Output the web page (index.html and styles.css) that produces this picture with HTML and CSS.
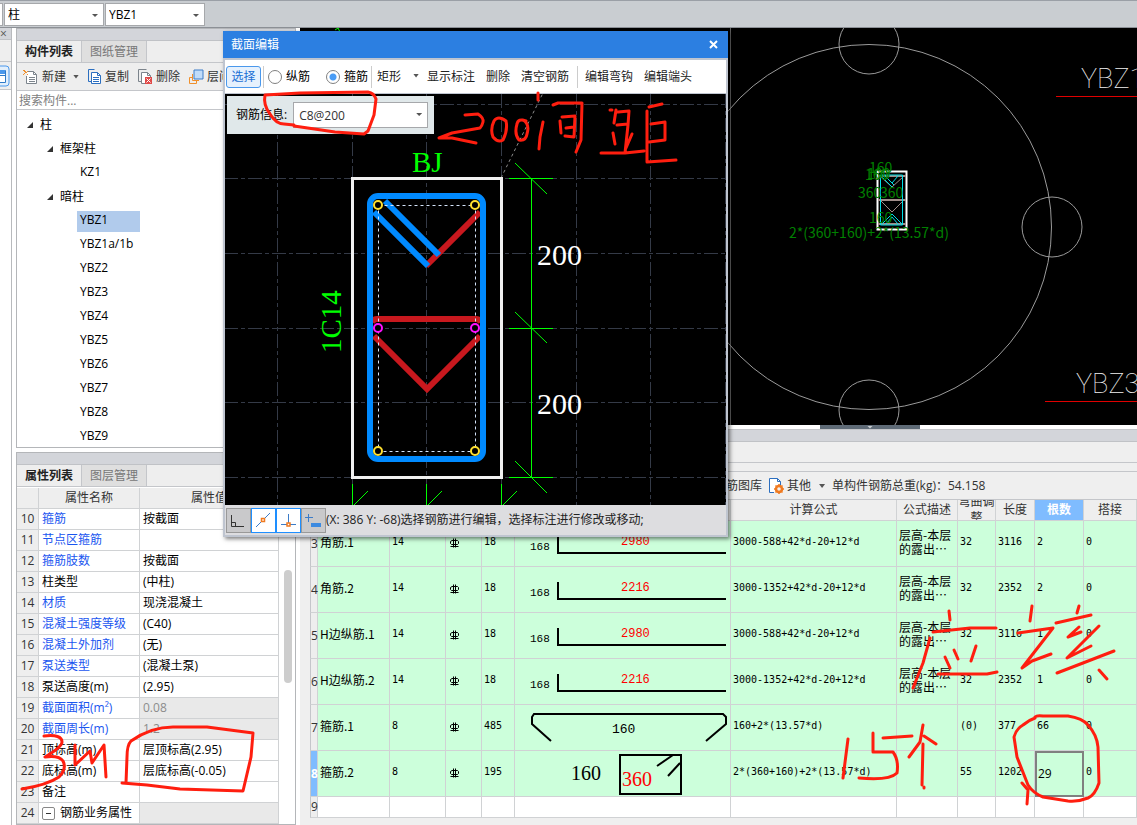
FILE: index.html
```html
<!DOCTYPE html>
<html lang="zh-CN">
<head>
    <title>截面编辑</title>
    <meta charset="utf-8">
    <link rel="stylesheet" href="styles.css">
</head>
<body>
    <svg class="defs" aria-hidden="true">
        <symbol id="rebar" viewBox="0 0 11 11">
            <path d="M4.500 0.500v9M6.500 0.500v9M1.500 8.500h8M3 2.500h5.500l1 1v2l-1 1h-6l-1-1v-2z" fill="none" stroke="#000"/>
        </symbol>
        <symbol id="bar" viewBox="0 0 215 45">
            <path d="M43 15v17h168" fill="none" stroke="#000" stroke-width="2"/>
        </symbol>
    </svg>

    <header class="topbar">
        <span class="combo combo-edge"></span>
        <span class="combo"><select aria-label="构件类型"><option>柱</option></select></span>
        <span class="combo"><select aria-label="构件名称"><option>YBZ1</option></select></span>
    </header>

    <div class="workspace">
        <aside class="rail">
            <div class="strip"><button class="rail-close" aria-label="关闭">×</button></div>
            <div class="rail-gap"></div>
            <div class="rail-tool">
                <svg width="10" height="23" viewBox="0 0 10 23"><path d="M0 1h6q3 0 3 3v14q0 3-3 3H0" fill="#e2effc" stroke="#4a98ec"/><path d="M0 5.500h5.500v12H0M0 10.500h5" fill="#fff" stroke="#2e7ac8"/><path d="M0 5h5v4H0z" fill="#4a98ec"/></svg>
            </div>
        </aside>

        <div class="side">
            <section class="panel">
                <div class="strip"></div>
                <nav class="tabs">
                    <button class="tab active">构件列表</button>
                    <button class="tab">图纸管理</button>
                </nav>
                <div class="toolbar">
                    <button class="tool">
                        <svg width="16" height="16" viewBox="0 0 16 16"><path d="M4.500 2.500h6l3 3v9h-10V7" fill="#fff" stroke="#7c848c"/><path d="M10.500 2.500v3h3M6 8.500h6M6 10.500h6M6 12.500h6" fill="none" stroke="#7c848c"/><path d="M0 1h2v1h1v1h1V2h1v1H4v1H3v1h2v1H4V5H3V4H2v1H1v1H0V5h1V4h1V3H1V2H0z" fill="#f0902c"/></svg>
                        新建<i class="caret"></i>
                    </button>
                    <button class="tool">
                        <svg width="14" height="16" viewBox="0 0 14 16"><path d="M3 12.500H.5V.5h6" fill="none" stroke="#2c6fc0"/><path d="M3.500 3.500h6l3 3v8h-9z" fill="#fff" stroke="#2c6fc0"/><path d="M9.500 3.500v3h3M5 8.500h6M5 10.500h6M5 12.500h6" fill="none" stroke="#2c6fc0"/></svg>
                        复制
                    </button>
                    <button class="tool">
                        <svg width="15" height="16" viewBox="0 0 15 16"><path d="M3 12.500H.5V.5h8" fill="none" stroke="#7c848c"/><path d="M7 14.500H3.500v-11h6l3 3V8" fill="#fff" stroke="#7c848c"/><path d="M9.500 3.500v3h3" fill="none" stroke="#7c848c"/><path d="M7 8h7v7H7z" fill="#e04a48"/><path d="M8.500 9.500l4 4m0-4l-4 4" stroke="#fff"/></svg>
                        删除
                    </button>
                    <button class="tool">
                        <svg width="15" height="16" viewBox="0 0 15 16"><path d="M3 8.500H.5v6h7v-3" fill="none" stroke="#f0902c"/><path d="M3.500 5v6.500H10" fill="none" stroke="#f0902c"/><path d="M5 1h9v9H5z" fill="#c0dcfa" stroke="#3c7cc8"/></svg>
                        层间复制
                    </button>
                </div>
                <input class="search" type="text" placeholder="搜索构件..." aria-label="搜索构件">
                <ul class="tree">
                    <li class="node lv1"><i class="fold"></i>柱</li>
                    <li class="node lv2"><i class="fold"></i>框架柱</li>
                    <li class="node lv3"><span>KZ1</span></li>
                    <li class="node lv2"><i class="fold"></i>暗柱</li>
                    <li class="node lv3 selected"><span>YBZ1</span></li>
                    <li class="node lv3"><span>YBZ1a/1b</span></li>
                    <li class="node lv3"><span>YBZ2</span></li>
                    <li class="node lv3"><span>YBZ3</span></li>
                    <li class="node lv3"><span>YBZ4</span></li>
                    <li class="node lv3"><span>YBZ5</span></li>
                    <li class="node lv3"><span>YBZ6</span></li>
                    <li class="node lv3"><span>YBZ7</span></li>
                    <li class="node lv3"><span>YBZ8</span></li>
                    <li class="node lv3"><span>YBZ9</span></li>
                </ul>
            </section>

            <section class="panel">
                <div class="strip"></div>
                <nav class="tabs">
                    <button class="tab active">属性列表</button>
                    <button class="tab">图层管理</button>
                </nav>
                <div class="props-wrap">
                    <table class="props">
                        <colgroup><col class="p-no"><col class="p-name"><col></colgroup>
                        <thead><tr><th></th><th>属性名称</th><th>属性值</th></tr></thead>
                        <tbody>
                            <tr><th>10</th><td class="link">箍筋</td><td>按截面</td></tr>
                            <tr><th>11</th><td class="link">节点区箍筋</td><td></td></tr>
                            <tr><th>12</th><td class="link">箍筋肢数</td><td>按截面</td></tr>
                            <tr><th>13</th><td>柱类型</td><td>(中柱)</td></tr>
                            <tr><th>14</th><td class="link">材质</td><td>现浇混凝土</td></tr>
                            <tr><th>15</th><td class="link">混凝土强度等级</td><td>(C40)</td></tr>
                            <tr><th>16</th><td class="link">混凝土外加剂</td><td>(无)</td></tr>
                            <tr><th>17</th><td class="link">泵送类型</td><td>(混凝土泵)</td></tr>
                            <tr><th>18</th><td>泵送高度(m)</td><td>(2.95)</td></tr>
                            <tr><th>19</th><td class="link">截面面积(m²)</td><td class="locked">0.08</td></tr>
                            <tr><th>20</th><td class="link">截面周长(m)</td><td class="locked">1.2</td></tr>
                            <tr><th>21</th><td>顶标高(m)</td><td>层顶标高(2.95)</td></tr>
                            <tr><th>22</th><td>底标高(m)</td><td>层底标高(-0.05)</td></tr>
                            <tr><th>23</th><td>备注</td><td></td></tr>
                            <tr><th>24</th><td class="group"><button class="minus" aria-label="折叠"></button>钢筋业务属性</td><td class="locked"></td></tr>
                            <tr><th></th><td></td><td></td></tr>
                        </tbody>
                    </table>
                    <div class="scroll"><div class="thumb"></div></div>
                </div>
            </section>
        </div>

        <main class="main">
            <div class="viewport">
                <svg class="plan" width="837" height="397" viewBox="300 28 837 397">
                    <path d="M335 30l3-2 2 4" stroke="#00ff00" fill="none"/>
                    <path d="M730.500 28v397" stroke="#5c5c5c"/>
                    <g fill="none" stroke="#9a9a9a">
                        <circle cx="869" cy="227" r="182.500"/>
                        <circle cx="869" cy="44" r="30"/>
                        <circle cx="1052" cy="227" r="30"/>
                        <circle cx="869" cy="410" r="30"/>
                    </g>
                    <path d="M1056 96.500h81" stroke="#e00000"/>
                    <path d="M1045 401.500h92" stroke="#e00000"/>
                    <text class="axis" x="1081" y="88">YBZ1</text>
                    <text class="axis" x="1076" y="393">YBZ3</text>
                    <g fill="none">
                        <path d="M877.500 171.500h29v58h-29z" stroke="#fff" stroke-width="2"/>
                        <path d="M878 176h28M878 200h28M878 224h28" stroke="#a08c88" stroke-width="2"/>
                        <path d="M881 177l11 10 11-10M881 201l11 11 11-11M892 214l-10 10M892 214l10 10" stroke="#a08c88"/>
                        <path d="M880.500 175h22v50h-22zM882 177l10 10M885 176l9 9M892 183l6-7M882 224l10-10 10 10M886 224l6-7 6 7" stroke="#00e0e8"/>
                    </g>
                    <g class="cad">
                        <text x="869" y="173">160</text>
                        <text x="865" y="180">160</text>
                        <text x="867" y="179">100</text>
                        <text x="858" y="198">360</text>
                        <text x="880" y="198">360</text>
                        <text x="869" y="223">160</text>
                        <text x="789" y="238">2*(360+160)+2*(13.57*d)</text>
                    </g>
                </svg>
            </div>
            <div class="splitter"><button class="grip" aria-label="收起"></button></div>
            <section class="detail">
                <div class="strip"></div>
                <div class="detail-tabs"></div>
                <div class="detail-gap"></div>
                <div class="detail-tools">
                    <button class="tool">钢筋图库</button>
                    <button class="tool">
                        <svg width="15" height="16" viewBox="0 0 15 16"><path d="M5 14.500H.5V.5h8l3 3V8" fill="#fff" stroke="#2c6fc0"/><path d="M8.500.5v3h3" fill="none" stroke="#2c6fc0"/><circle cx="10" cy="11" r="3" fill="none" stroke="#f07a20" stroke-width="2.500"/><path d="M10 6v2m0 6v2m-5-5h2m6 0h2m-8.500-3.500l1.500 1.500m4 4l1.500 1.500m0-7l-1.500 1.500m-4 4l-1.500 1.500" stroke="#f07a20" stroke-width="1.500"/></svg>
                        其他<i class="caret"></i>
                    </button>
                    <span class="total">单构件钢筋总重(kg)：54.158</span>
                </div>
                <table class="bars">
                    <colgroup>
                        <col class="b-no"><col class="b-name"><col class="b-dia"><col class="b-lv"><col class="b-code"><col class="b-shape">
                        <col class="b-calc"><col class="b-desc"><col class="b-adj"><col class="b-len"><col class="b-cnt"><col>
                    </colgroup>
                    <thead>
                        <tr>
                            <th></th><th>筋号</th><th>直径</th><th>级别</th><th>图号</th><th>图形</th>
                            <th>计算公式</th><th>公式描述</th><th><div class="clip">弯曲调整</div></th><th>长度</th><th class="picked">根数</th><th>搭接</th>
                        </tr>
                    </thead>
                    <tbody>
                        <tr>
                            <th>3</th><td class="zh">角筋.1</td><td>14</td><td><svg class="lv"><use href="#rebar"/></svg></td><td>18</td>
                            <td class="shape"><svg width="215" height="45"><use href="#bar"/><text class="t11" x="15" y="29">168</text><text class="t12 red" x="106" y="24">2980</text></svg></td>
                            <td>3000-588+42*d-20+12*d</td><td class="zh">层高-本层<br>的露出…</td><td>32</td><td>3116</td><td>2</td><td>0</td>
                        </tr>
                        <tr>
                            <th>4</th><td class="zh">角筋.2</td><td>14</td><td><svg class="lv"><use href="#rebar"/></svg></td><td>18</td>
                            <td class="shape"><svg width="215" height="45"><use href="#bar"/><text class="t11" x="15" y="29">168</text><text class="t12 red" x="106" y="24">2216</text></svg></td>
                            <td>3000-1352+42*d-20+12*d</td><td class="zh">层高-本层<br>的露出…</td><td>32</td><td>2352</td><td>2</td><td>0</td>
                        </tr>
                        <tr>
                            <th>5</th><td class="zh">H边纵筋.1</td><td>14</td><td><svg class="lv"><use href="#rebar"/></svg></td><td>18</td>
                            <td class="shape"><svg width="215" height="45"><use href="#bar"/><text class="t11" x="15" y="29">168</text><text class="t12 red" x="106" y="24">2980</text></svg></td>
                            <td>3000-588+42*d-20+12*d</td><td class="zh">层高-本层<br>的露出…</td><td>32</td><td>3116</td><td>1</td><td>0</td>
                        </tr>
                        <tr>
                            <th>6</th><td class="zh">H边纵筋.2</td><td>14</td><td><svg class="lv"><use href="#rebar"/></svg></td><td>18</td>
                            <td class="shape"><svg width="215" height="45"><use href="#bar"/><text class="t11" x="15" y="29">168</text><text class="t12 red" x="106" y="24">2216</text></svg></td>
                            <td>3000-1352+42*d-20+12*d</td><td class="zh">层高-本层<br>的露出…</td><td>32</td><td>2352</td><td>1</td><td>0</td>
                        </tr>
                        <tr>
                            <th>7</th><td class="zh">箍筋.1</td><td>8</td><td><svg class="lv"><use href="#rebar"/></svg></td><td>485</td>
                            <td class="shape"><svg width="215" height="45"><path d="M36 36L17 19v-7l2-3h189l3 3v7L191 36" fill="none" stroke="#000" stroke-width="2"/><text class="t13" x="97" y="28">160</text></svg></td>
                            <td>160+2*(13.57*d)</td><td></td><td>(0)</td><td>377</td><td>66</td><td>0</td>
                        </tr>
                        <tr>
                            <th class="picked">8</th><td class="zh">箍筋.2</td><td>8</td><td><svg class="lv"><use href="#rebar"/></svg></td><td>195</td>
                            <td class="shape"><svg width="215" height="45"><path d="M105 4h61v39h-61zM142 15l16-11M153 25l12-13" fill="none" stroke="#000" stroke-width="2"/><text class="t20" x="56" y="29">160</text><text class="t20 red" x="107" y="35">360</text></svg></td>
                            <td>2*(360+160)+2*(13.57*d)</td><td></td><td>55</td><td>1202</td><td class="current">29</td><td>0</td>
                        </tr>
                        <tr class="blank">
                            <th>9</th><td></td><td></td><td></td><td></td><td></td><td></td><td></td><td></td><td></td><td></td><td></td>
                        </tr>
                    </tbody>
                </table>
            </section>
        </main>
    </div>

    <section class="dialog" role="dialog" aria-label="截面编辑">
        <div class="dialog-title">截面编辑<button class="dialog-close" aria-label="关闭"><svg width="9" height="9" viewBox="0 0 9 9"><path d="M1 1l7 7m0-7l-7 7" stroke="#fff" stroke-width="2"/></svg></button></div>
        <div class="dialog-tools">
            <button class="pick">选择</button>
            <i class="sep"></i>
            <label class="radio"><input type="radio" name="kind">纵筋</label>
            <label class="radio"><input type="radio" name="kind" checked>箍筋</label>
            <i class="sep"></i>
            <button class="cmd drop">矩形<i class="caret"></i></button>
            <button class="cmd">显示标注</button>
            <button class="cmd">删除</button>
            <button class="cmd">清空钢筋</button>
            <i class="sep wide"></i>
            <button class="cmd">编辑弯钩</button>
            <button class="cmd">编辑端头</button>
        </div>
        <div class="dialog-canvas">
            <svg class="section" width="501" height="411" viewBox="225 94 501 411">
                <path d="M224 104.500h502M224 178.500h502M224 253.500h502M224 328.500h502M224 402.500h502M224 477.500h502M277.500 94v411M352.500 94v411M426.500 94v411M501.500 94v411M576.500 94v411M650.500 94v411M725.500 94v411" stroke="#343a47" stroke-dasharray="14 3 4 3" fill="none"/>
                <path d="M501 178l42-85" stroke="#8c8c8c" stroke-dasharray="3 3"/>
                <path d="M352.500 178.500h149v299h-149z" fill="none" stroke="#f0f0f0" stroke-width="3"/>
                <g fill="none" stroke="#c8181e" stroke-width="6">
                    <path d="M480 212l-54 54"/>
                    <path d="M372 322q2-3 5-3h99q3 0 5 3M374 336l53 53 53-53"/>
                </g>
                <path d="M374 212l54 54M385 201l54 54" stroke="#008aff" stroke-width="6"/>
                <rect x="370" y="196" width="113" height="263" rx="8" fill="none" stroke="#008aff" stroke-width="6"/>
                <path d="M378.500 205.500h97v246h-97z" fill="none" stroke="#d4e4fa" stroke-dasharray="3 3"/>
                <g fill="#000" stroke="#ffe030" stroke-width="2">
                    <circle cx="378" cy="205" r="4"/><circle cx="475" cy="205" r="4"/>
                    <circle cx="378" cy="451" r="4"/><circle cx="475" cy="451" r="4"/>
                </g>
                <g fill="#000" stroke="#ff10ff" stroke-width="2">
                    <circle cx="378" cy="328" r="4"/><circle cx="475" cy="328" r="4"/>
                </g>
                <path d="M531.500 178v300M509 178.500h44M509 328.500h44M509 477.500h44M515 163l32 31M515 312l32 31M515 461l32 32M352.500 484v21M354 505l14-14M426.500 484v21M428 505l14-14M501.500 484v21M503 505l14-14" stroke="#00ff00" fill="none"/>
                <text class="dim green" x="412" y="172">BJ</text>
                <text class="dim green" transform="translate(341 353) rotate(-90)">1C14</text>
                <text class="dim" x="537" y="265">200</text>
                <text class="dim" x="537" y="414">200</text>
            </svg>
            <div class="info">
                <label for="rebarInfo">钢筋信息:</label>
                <span class="combo"><select id="rebarInfo"><option>C8@200</option></select></span>
            </div>
        </div>
        <div class="dialog-status">
            <button class="snap" aria-label="正交"><svg width="23" height="23" viewBox="0 0 23 23"><path d="M4.500 6v11.500H17M4.500 13.500h4v4" fill="none" stroke="#333"/></svg></button>
            <button class="snap on" aria-label="中点"><svg width="23" height="23" viewBox="0 0 23 23"><path d="M4 18L18 4" stroke="#3c7cc8"/><path d="M9.500 9.500h3v3h-3z" fill="#fff" stroke="#f07a20" stroke-width="1.500"/></svg></button>
            <button class="snap on" aria-label="垂点"><svg width="23" height="23" viewBox="0 0 23 23"><path d="M11.500 5v10M4 15.500h15" stroke="#3c7cc8"/><path d="M10 14h3v3h-3z" fill="#fff" stroke="#f07a20" stroke-width="1.500"/></svg></button>
            <button class="snap" aria-label="动态输入"><svg width="23" height="23" viewBox="0 0 23 23"><path d="M6.500 5v8M3 8.500h8" stroke="#3c7cc8"/><path d="M9 14h10v4H9z" fill="#3c8ae0"/></svg></button>
            <span>(X: 386 Y: -68)选择钢筋进行编辑，选择标注进行修改或移动;</span>
        </div>
    </section>

    <!-- 手写批注 -->
    <svg class="ink" width="1137" height="825" viewBox="0 0 1137 825" aria-hidden="true">
        <path d="M294 126l41 6 29 2 4-3 6-16 2-16q-2-6-8-7l-68 1-35 2q-2 10 5 19 6 10 14 10l10 1"/>
        <path d="M465 115l13-1q6 4 5 8t-3 6l-28 5-13 5 13 0 24 5"/>
        <path d="M506 121q-8-6-12 0-4 8-1 16 5 6 10 3 5-10 3-19M526 121q-8-3-9 3-3 10 2 16 7 1 8-6 3-10-4-14M543 122l-3 15-1 12M538 93v7"/>
        <path d="M553 105l5-2h24l-1 37-5 12M560 121l1 12M562 117l13-1-1 21-9-1M566 128l8-1"/>
        <path d="M610 110h2M616 110l-2 13M618 112l11-1-1 14-3 28M617 125l11-1M613 133l2 11M632 134l-6 14M601 153h24l19-2M647 111v51l29-2M649 107l13-3M651 124l14-2v18l-16 2"/>
        <path d="M44 736q18-2 18 6 0 5-17 15 14-2 18 4 4 8-4 16-12 8-37 12M75 745v20l15-14 2 12 12-18 2 32"/>
        <path d="M126 783l1-26q0-12 4-16 20-14 42-14h34l46 6-2 24-8 34-63-2-33-4-25-2"/>
        <path d="M949 611l1 9M933 632l37-4h26M930 638l-7 25-10 25M945 657l5 11M954 650l4 9M976 646l-5 15M938 674h49l10-2"/>
        <path d="M1032 606l-2 15M1018 633l35-5-31 40 10-7 19-7M1079 606l-2 7M1056 623l35-8M1079 627l-11 10 13-5M1099 626l-32 32 24-12M1057 673l26-10 31-12M1099 670l8 9"/>
        <path d="M848 739l-5 39M873 733v19h20q6 8 4 21-8 8-38 5M883 738l29-2M923 725l-3 17-11 15M924 736l12 8M923 744l-1 41M924 787v1"/>
        <path d="M1035 717q2-2 8-1h25q14 2 20 9 9 10 10 22l1 36q-4 12-11 15-10 4-20 3l-25-4q-10-4-15-12l-11-28-3-20q2-8 9-12 6-5 12-7M1022 783l6 7-1 14"/>
    </svg>
</body>
</html>
```
FILE: styles.css
```css
* {
    box-sizing: border-box;
}
body {
    margin: 0;
    height: 100vh;
    display: flex;
    flex-direction: column;
    overflow: hidden;
    position: relative;
    background: #fff;
    color: #000;
    font-family: "Open Sans", "Noto Sans CJK SC", sans-serif;
    font-size: 12px;
    line-height: 16px;
}
button, input, select {
    font: inherit;
    color: inherit;
    margin: 0;
    padding: 0;
    border: none;
    background: none;
}
svg {
    flex: none;
}
.defs {
    position: absolute;
    width: 0;
    height: 0;
}
.caret {
    display: inline-block;
    width: 6px;
    height: 4px;
    margin-left: 4px;
    background: #555;
    clip-path: polygon(0 0, 100% 0, 50% 100%);
}

/* 顶部工具条 */
.topbar {
    flex: none;
    display: flex;
    gap: 1px;
    height: 28px;
    padding-top: 2px;
    border-top: 1px solid #9a9fa6;
    border-bottom: 1px solid #8c9096;
    background: #c9cdd1;
}
.combo {
    position: relative;
    width: 100px;
    height: 23px;
    border: 1px solid #a6a8ab;
    background: #fff;
}
.combo-edge {
    width: 3px;
    border-left: none;
}
.combo select {
    appearance: none;
    width: 100%;
    height: 100%;
    padding-left: 3px;
}
.combo:not(.combo-edge)::after {
    content: "";
    position: absolute;
    top: 10px;
    right: 5px;
    width: 6px;
    height: 3px;
    background: #555;
    clip-path: polygon(0 0, 100% 0, 50% 100%);
    pointer-events: none;
}

.workspace {
    flex: 1;
    min-height: 0;
    display: flex;
    gap: 4px;
}
.strip {
    flex: none;
    height: 12px;
    background: #d3d5da;
    border-bottom: 1px solid #c0c2c6;
}

/* 左侧窄条 */
.rail {
    width: 12px;
    border-right: 1px solid #b8babd;
}
.rail-close {
    display: block;
    line-height: 11px;
    color: #555;
}
.rail-gap {
    height: 22px;
    background: #eee;
    border-bottom: 1px solid #c4c6ca;
}
.rail-tool {
    height: 28px;
    padding-top: 3px;
    background: #eee;
    border-bottom: 1px solid #c4c6ca;
}

/* 构件与属性面板 */
.side {
    width: 280px;
    display: grid;
    grid-template-rows: minmax(0, 420fr) minmax(0, 373fr);
    gap: 4px;
}
.panel {
    display: flex;
    flex-direction: column;
    overflow: hidden;
    border: 1px solid #b4b6b9;
}
.tabs {
    flex: none;
    display: flex;
    height: 22px;
    background: #eee;
    border-bottom: 1px solid #c4c6ca;
}
.tab {
    width: 65px;
    border-right: 1px solid #c4c6ca;
    background: #dfdfdf;
    color: #777;
}
.tab.active {
    background: #eee;
    color: #222;
    font-weight: bold;
}
.toolbar {
    flex: none;
    display: flex;
    align-items: center;
    gap: 9px;
    height: 28px;
    padding-left: 6px;
    background: #eee;
    border-bottom: 1px solid #c4c6ca;
}
.tool {
    display: flex;
    flex: none;
    align-items: center;
    gap: 3px;
    color: #333;
}
.search {
    flex: none;
    height: 19px;
    padding-left: 2px;
    border-bottom: 1px solid #c4c6ca;
}
.search::placeholder {
    color: #808080;
    opacity: 1;
}
.tree {
    list-style: none;
    margin: 0;
    padding: 3px 0 0;
}
.node {
    display: flex;
    align-items: center;
    height: 24px;
}
.lv1 {
    padding-left: 10px;
}
.lv2 {
    padding-left: 30px;
}
.lv3 {
    padding-left: 60px;
}
.lv3 span {
    padding: 1px 3px 4px;
}
.selected span {
    width: 63px;
    background: #b1cbec;
}
.fold {
    width: 6px;
    height: 6px;
    margin-right: 7px;
    background: #333;
    clip-path: polygon(100% 0, 100% 100%, 0 100%);
}

table {
    border-collapse: separate;
    border-spacing: 0;
    table-layout: fixed;
}
th, td {
    padding: 0;
    border-right: 1px solid #d0d2d4;
    border-bottom: 1px solid #d0d2d4;
    font-weight: normal;
    white-space: nowrap;
}
th {
    background: #eee;
    color: #333;
}
.props-wrap {
    display: flex;
    min-height: 0;
    padding-top: 1px;
}
.props {
    flex: 1;
    width: 0;
}
.props th, .props td {
    height: 21px;
}
.props td {
    padding-left: 3px;
}
.p-no {
    width: 22px;
}
.p-name {
    width: 101px;
}
.props .link {
    color: #1a56f0;
}
.props .locked {
    background: #e9e9e9;
    color: #8c8c8c;
}
.props .minus {
    width: 13px;
    height: 13px;
    margin-right: 5px;
    border: 1px solid #888;
    border-radius: 2px;
    background: linear-gradient(#333, #333) center / 5px 1px no-repeat #fff;
    vertical-align: -2px;
}
.scroll {
    width: 16px;
    padding: 82px 3px 0 5px;
}
.thumb {
    height: 113px;
    border-radius: 4px;
    background: #cdcdcd;
}

/* 绘图区 */
.main {
    flex: 1;
    min-width: 0;
    display: grid;
    grid-template-rows: minmax(0, 397fr) 4px minmax(0, 396fr);
}
.viewport {
    overflow: hidden;
    background: #000;
}
.plan {
    display: block;
}
.axis {
    fill: #f0f0f0;
    font-family: "Roboto", sans-serif;
    font-size: 27px;
    font-weight: 100;
}
.cad {
    fill: #008000;
    font-family: "Noto Sans CJK SC", sans-serif;
    font-size: 14px;
}
.splitter {
    padding-left: 520px;
}
.grip {
    display: block;
    width: 100px;
    height: 4px;
    background: #5f6b77;
}
.grip::before {
    content: "";
    display: block;
    width: 6px;
    height: 3px;
    margin: 0 auto;
    background: #c8ccd0;
    clip-path: polygon(0 0, 100% 0, 50% 100%);
}

/* 钢筋明细 */
.detail {
    overflow: hidden;
    background: #efefef;
    border-top: 1px solid #c4c6ca;
}
.detail-tabs {
    height: 21px;
    border-bottom: 1px solid #c4c6ca;
}
.detail-gap {
    height: 9px;
    border-bottom: 1px solid #c4c6ca;
}
.detail-tools {
    display: flex;
    align-items: center;
    gap: 7px;
    height: 28px;
    padding: 1px 0 0 414px;
    border-bottom: 1px solid #c4c6ca;
}
.detail-tools .caret {
    margin-left: 5px;
}
.total {
    color: #333;
}
.bars {
    width: calc(100% - 10px);
    margin-left: 10px;
    background: #fff;
}
.bars th {
    height: 21px;
}
.bars tbody th {
    border-left: 1px solid #c4c6ca;
}
.bars td {
    height: 46px;
    padding: 0 0 3px 2px;
    background: #ccffdb;
    font-family: "DejaVu Sans Mono", monospace;
    font-size: 10px;
}
.bars .zh {
    font-family: "Noto Sans CJK SC", sans-serif;
    font-size: 12px;
    line-height: 14px;
}
.bars .shape {
    padding: 0;
}
.shape svg {
    display: block;
}
.bars .picked {
    background: #7fbcff;
    color: #fff;
    font-weight: bold;
}
.bars .current {
    padding: 0 0 0 1px;
    border: 2px solid #808080;
    font-family: "Open Sans", sans-serif;
    font-size: 12px;
}
.blank td, .blank th {
    height: 21px;
}
.bars .blank td {
    height: 21px;
    background: #fff;
}
.clip {
    display: flex;
    align-items: center;
    justify-content: center;
    height: 20px;
    overflow: hidden;
    white-space: normal;
}
.lv {
    display: block;
    width: 11px;
    height: 11px;
    margin: 3px 0 0 1px;
}
.b-no { width: 8px; }
.b-name { width: 72px; }
.b-dia { width: 56px; }
.b-lv { width: 36px; }
.b-code { width: 33px; }
.b-shape { width: 216px; }
.b-calc { width: 166px; }
.b-desc { width: 61px; }
.b-adj { width: 38px; }
.b-len { width: 39px; }
.b-cnt { width: 49px; }
.shape text {
    font-family: "Liberation Mono", monospace;
}
.t11 { font-size: 11px; }
.t12 { font-size: 12px; }
.t13 { font-size: 13px; }
.shape .t20 {
    font-family: "Liberation Serif", serif;
    font-size: 20px;
}
.red {
    fill: #f00;
}

/* 截面编辑窗口 */
.dialog {
    position: absolute;
    left: 223px;
    top: 31px;
    width: 505px;
    display: flex;
    flex-direction: column;
    border: 2px solid #bfc5d0;
    border-top: none;
    box-shadow: 2px 2px 4px rgba(0, 0, 0, 0.5);
    background: #bfc5d0;
}
.dialog-title {
    display: flex;
    align-items: center;
    justify-content: space-between;
    height: 27px;
    margin: 0 -2px;
    padding: 0 10px 0 8px;
    background: #2c7fe1;
    color: #fff;
}
.dialog-close {
    display: flex;
}
.dialog-tools {
    display: flex;
    align-items: center;
    height: 33px;
    margin: 2px 0 1px;
    background: #fff;
}
.pick {
    width: 35px;
    height: 22px;
    margin: 0 2px 0 1px;
    border: 1px solid #4a98ec;
    border-radius: 3px;
    background: #e6f1fd;
    color: #1a6fd4;
}
.sep {
    width: 1px;
    height: 22px;
    background: #ccc;
}
.sep.wide {
    margin: 0 2px;
}
.radio {
    display: flex;
    align-items: center;
    gap: 4px;
    margin-left: 4px;
    margin-right: 12px;
}
.radio:nth-of-type(2) {
    margin-right: 3px;
}
.radio input {
    appearance: none;
    width: 14px;
    height: 14px;
    border: 1px solid #808080;
    border-radius: 50%;
    background: #fff;
}
.radio input:checked {
    background: radial-gradient(#4a9cf5 3px, #fff 4px);
}
.cmd {
    height: 20px;
    margin-right: 1px;
    padding: 0 5px;
    color: #222;
}
.drop {
    margin-right: 0;
    padding-right: 3px;
}
.drop .caret {
    margin: 0 0 3px 12px;
}
.dialog-canvas {
    position: relative;
    height: 411px;
    overflow: hidden;
    background: #000;
}
.section {
    display: block;
}
.dim {
    fill: #fff;
    font-family: "Liberation Serif", serif;
    font-size: 30px;
}
.green {
    fill: #00ff00;
    font-size: 29px;
}
.info {
    position: absolute;
    left: 2px;
    top: 2px;
    display: flex;
    align-items: center;
    gap: 6px;
    height: 38px;
    padding: 0 6px 0 9px;
    background: #e0e8ea;
}
.info .combo {
    width: 135px;
    height: 26px;
    color: #333;
}
.info select {
    padding: 2px 0 0 5px;
}
.dialog-status {
    display: flex;
    align-items: center;
    height: 30px;
    padding-left: 1px;
    background: #dddde0;
    color: #222;
}
.snap {
    display: flex;
    width: 25px;
    height: 25px;
    border: 1px solid #999;
    background: #c9c9cb;
}
.snap.on {
    border-color: #1e8fff;
    background: #fff;
}

.ink {
    position: absolute;
    left: 0;
    top: 0;
    fill: none;
    stroke: #ff1e0f;
    stroke-width: 3;
    stroke-linecap: round;
    stroke-linejoin: round;
    pointer-events: none;
}
```
